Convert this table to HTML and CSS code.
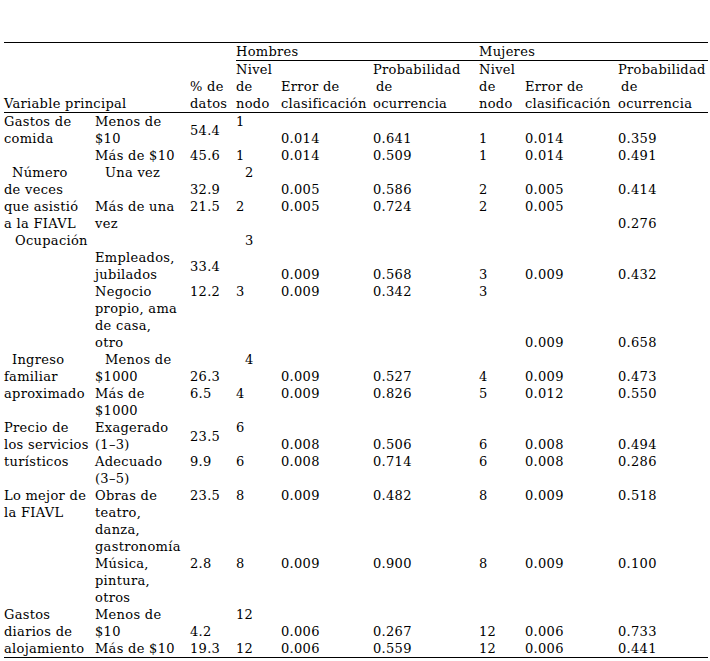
FILE: index.html
```html
<!DOCTYPE html>
<html lang="es">
<head>
<meta charset="utf-8">
<title>Tabla</title>
<link rel="stylesheet" href="styles.css">
</head>
<body>
<div class="page">
<table class="data">
<colgroup>
<col class="w1"><col class="w2"><col class="w3"><col class="w4"><col class="w5"><col class="w6"><col class="w7"><col class="w8"><col class="w9">
</colgroup>
<thead>
<tr><td colspan="3"></td><td colspan="3" class="group">Hombres</td><td colspan="3" class="group">Mujeres</td></tr>
<tr><td colspan="3"></td><td>Nivel</td><td></td><td>Probabilidad</td><td>Nivel</td><td></td><td>Probabilidad</td></tr>
<tr><td></td><td></td><td>% de</td><td>de</td><td>Error de</td><td class="sp">de</td><td>de</td><td>Error de</td><td class="sp">de</td></tr>
<tr class="last-head"><td colspan="2">Variable principal</td><td>datos</td><td>nodo</td><td>clasificación</td><td>ocurrencia</td><td>nodo</td><td>clasificación</td><td>ocurrencia</td></tr>
</thead>
<tbody>
<tr><td>Gastos de</td><td>Menos de</td><td rowspan="2">54.4</td><td>1</td><td></td><td></td><td></td><td></td><td></td></tr>
<tr><td>comida</td><td>$10</td><td></td><td>0.014</td><td>0.641</td><td>1</td><td>0.014</td><td>0.359</td></tr>
<tr><td></td><td>Más de $10</td><td>45.6</td><td>1</td><td>0.014</td><td>0.509</td><td>1</td><td>0.014</td><td>0.491</td></tr>
<tr><td class="in8">Número</td><td class="in10">Una vez</td><td></td><td class="in9">2</td><td></td><td></td><td></td><td></td><td></td></tr>
<tr><td>de veces</td><td></td><td>32.9</td><td></td><td>0.005</td><td>0.586</td><td>2</td><td>0.005</td><td>0.414</td></tr>
<tr><td>que asistió</td><td>Más de una</td><td>21.5</td><td>2</td><td>0.005</td><td>0.724</td><td>2</td><td>0.005</td><td></td></tr>
<tr><td>a la FIAVL</td><td>vez</td><td></td><td></td><td></td><td></td><td></td><td></td><td>0.276</td></tr>
<tr><td class="in11">Ocupación</td><td></td><td></td><td class="in9">3</td><td></td><td></td><td></td><td></td><td></td></tr>
<tr><td></td><td>Empleados,</td><td rowspan="2">33.4</td><td></td><td></td><td></td><td></td><td></td><td></td></tr>
<tr><td></td><td>jubilados</td><td></td><td>0.009</td><td>0.568</td><td>3</td><td>0.009</td><td>0.432</td></tr>
<tr><td></td><td>Negocio</td><td>12.2</td><td>3</td><td>0.009</td><td>0.342</td><td>3</td><td></td><td></td></tr>
<tr><td></td><td>propio, ama</td><td></td><td></td><td></td><td></td><td></td><td></td><td></td></tr>
<tr><td></td><td>de casa,</td><td></td><td></td><td></td><td></td><td></td><td></td><td></td></tr>
<tr><td></td><td>otro</td><td></td><td></td><td></td><td></td><td></td><td>0.009</td><td>0.658</td></tr>
<tr><td class="in8">Ingreso</td><td class="in10">Menos de</td><td></td><td class="in9">4</td><td></td><td></td><td></td><td></td><td></td></tr>
<tr><td>familiar</td><td>$1000</td><td>26.3</td><td></td><td>0.009</td><td>0.527</td><td>4</td><td>0.009</td><td>0.473</td></tr>
<tr><td>aproximado</td><td>Más de</td><td>6.5</td><td>4</td><td>0.009</td><td>0.826</td><td>5</td><td>0.012</td><td>0.550</td></tr>
<tr><td></td><td>$1000</td><td></td><td></td><td></td><td></td><td></td><td></td><td></td></tr>
<tr><td>Precio de</td><td>Exagerado</td><td rowspan="2">23.5</td><td>6</td><td></td><td></td><td></td><td></td><td></td></tr>
<tr><td>los servicios</td><td>(1–3)</td><td></td><td>0.008</td><td>0.506</td><td>6</td><td>0.008</td><td>0.494</td></tr>
<tr><td>turísticos</td><td>Adecuado</td><td>9.9</td><td>6</td><td>0.008</td><td>0.714</td><td>6</td><td>0.008</td><td>0.286</td></tr>
<tr><td></td><td>(3–5)</td><td></td><td></td><td></td><td></td><td></td><td></td><td></td></tr>
<tr><td>Lo mejor de</td><td>Obras de</td><td>23.5</td><td>8</td><td>0.009</td><td>0.482</td><td>8</td><td>0.009</td><td>0.518</td></tr>
<tr><td>la FIAVL</td><td>teatro,</td><td></td><td></td><td></td><td></td><td></td><td></td><td></td></tr>
<tr><td></td><td>danza,</td><td></td><td></td><td></td><td></td><td></td><td></td><td></td></tr>
<tr><td></td><td>gastronomía</td><td></td><td></td><td></td><td></td><td></td><td></td><td></td></tr>
<tr><td></td><td>Música,</td><td>2.8</td><td>8</td><td>0.009</td><td>0.900</td><td>8</td><td>0.009</td><td>0.100</td></tr>
<tr><td></td><td>pintura,</td><td></td><td></td><td></td><td></td><td></td><td></td><td></td></tr>
<tr><td></td><td>otros</td><td></td><td></td><td></td><td></td><td></td><td></td><td></td></tr>
<tr><td>Gastos</td><td>Menos de</td><td></td><td>12</td><td></td><td></td><td></td><td></td><td></td></tr>
<tr><td>diarios de</td><td>$10</td><td>4.2</td><td></td><td>0.006</td><td>0.267</td><td>12</td><td>0.006</td><td>0.733</td></tr>
<tr class="last-row"><td>alojamiento</td><td>Más de $10</td><td>19.3</td><td>12</td><td>0.006</td><td>0.559</td><td>12</td><td>0.006</td><td>0.441</td></tr>
</tbody>
</table>
</div>
</body>
</html>
```
FILE: styles.css
```css
html, body {
  margin: 0;
  padding: 0;
  background: #fff;
}
.page {
  padding: 42px 0 0 4px;
}
.data {
  border-collapse: separate;
  border-spacing: 0;
  table-layout: fixed;
  width: 704px;
  border-top: 1px solid #000;
  font-family: "DejaVu Serif", serif;
  font-size: 13px;
  letter-spacing: 0.3px;
  color: #000;
}
.data td {
  padding: 0;
  height: 17px;
  line-height: 17px;
  white-space: nowrap;
  vertical-align: middle;
  text-align: left;
}
.w1 { width: 91px; }
.w2 { width: 95px; }
.w3 { width: 46px; }
.w4 { width: 45px; }
.w5 { width: 92px; }
.w6 { width: 106px; }
.w7 { width: 46px; }
.w8 { width: 93px; }
.w9 { width: 90px; }
.data td.group {
  border-bottom: 1px solid #000;
}
.last-head td,
.last-row td {
  border-bottom: 1px solid #000;
}
.data td.sp { padding-left: 3px; }
.data td.in8 { padding-left: 8px; }
.data td.in9 { padding-left: 9px; }
.data td.in10 { padding-left: 10px; }
.data td.in11 { padding-left: 11px; }
```
